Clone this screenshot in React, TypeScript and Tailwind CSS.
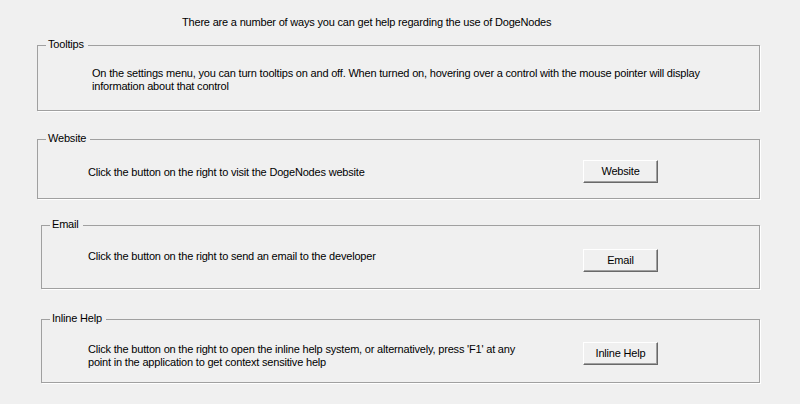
import { ReactNode } from 'react'

function GroupBox({ title, className = '', children }: { title: string; className?: string; children: ReactNode }) {
  return (
    <div className={`relative border border-[#a0a0a0] shadow-[1px_1px_0_#ffffff] ${className}`}>
      <span className="absolute left-[8px] top-[-8px] bg-[#f0f0f0] pl-[2px] pr-[4px] leading-[13px]">{title}</span>
      {children}
    </div>
  )
}

function WinButton({ label }: { label: string }) {
  return (
    <button className="h-[23px] w-[75px] shrink-0 border border-t-white border-l-white border-r-[#696969] border-b-[#696969] bg-[#f0f0f0] text-center leading-[13px] text-black shadow-[inset_-1px_-1px_0_#a0a0a0]">
      {label}
    </button>
  )
}

export default function App() {
  return (
    <div
      className="h-[404px] w-[800px] bg-[#f0f0f0] pl-[37px] pr-[40px] pt-[16px] text-[11px] leading-[13px] tracking-[-0.19px] text-black"
      style={{ fontFamily: '"Liberation Sans", Arial, sans-serif' }}
    >
      <p className="ml-[145px] h-[13px]">There are a number of ways you can get help regarding the use of DogeNodes</p>

      <GroupBox title="Tooltips" className="mt-[16px] h-[66px]">
        <p className="pl-[54px] pt-[21px]">
          On the settings menu, you can turn tooltips on and off. When turned on, hovering over a control with the mouse pointer will display
          <br />
          information about that control
        </p>
      </GroupBox>

      <GroupBox title="Website" className="mt-[28px] h-[60px]">
        <div className="flex pt-[20px] pl-[50px]">
          <p className="w-[495px] pt-[6px]">Click the button on the right to visit the DogeNodes website</p>
          <WinButton label="Website" />
        </div>
      </GroupBox>

      <GroupBox title="Email" className="ml-[4px] mt-[26px] h-[64px]">
        <div className="flex pt-[23px] pl-[46px]">
          <p className="w-[495px] pt-[1px]">Click the button on the right to send an email to the developer</p>
          <WinButton label="Email" />
        </div>
      </GroupBox>

      <GroupBox title="Inline Help" className="ml-[4px] mt-[30px] h-[64px]">
        <div className="flex pt-[22px] pl-[46px]">
          <p className="w-[495px] pt-[1px]">
            Click the button on the right to open the inline help system, or alternatively, press 'F1' at any
            <br />
            point in the application to get context sensitive help
          </p>
          <WinButton label="Inline Help" />
        </div>
      </GroupBox>
    </div>
  )
}
